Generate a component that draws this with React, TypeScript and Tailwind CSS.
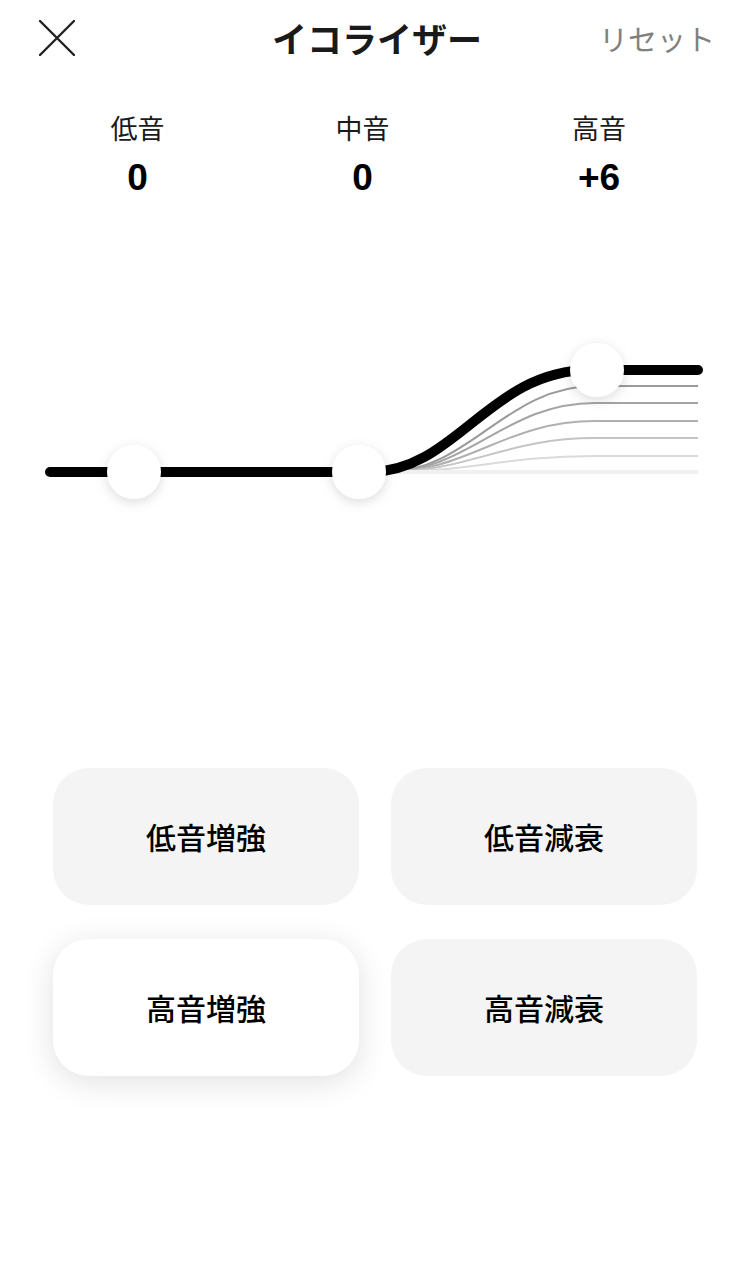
import React from "react";

const jp = { fontFamily: '"Noto Sans CJK JP", "Noto Sans", sans-serif' };
const num = { fontFamily: '"Liberation Sans", Arial, sans-serif' };

const bands = [
  { label: "低音", value: "0" },
  { label: "中音", value: "0" },
  { label: "高音", value: "+6" },
];

const presets = [
  { label: "低音増強", active: false },
  { label: "低音減衰", active: false },
  { label: "高音増強", active: true },
  { label: "高音減衰", active: false },
];

// faded curves behind the main line, top to bottom
const ghosts = [
  { y: 385, color: "#9a9a9a", w: 2 },
  { y: 402, color: "#a4a4a4", w: 2 },
  { y: 420, color: "#b0b0b0", w: 2 },
  { y: 437, color: "#c4c4c4", w: 2 },
  { y: 455, color: "#dadada", w: 2 },
  { y: 471, color: "#f0f0f0", w: 4 },
];

function Curve() {
  return (
    <svg
      width="750"
      height="260"
      viewBox="0 290 750 260"
      className="block"
    >
      <defs>
        <filter id="knob" x="-50%" y="-50%" width="200%" height="200%">
          <feDropShadow dx="0" dy="3" stdDeviation="6" floodColor="#000" floodOpacity="0.14" />
        </filter>
      </defs>
      {ghosts.map((g) => (
        <path
          key={g.y}
          d={`M385 471 C470 471 505 ${g.y} 595 ${g.y} L698 ${g.y}`}
          fill="none"
          stroke={g.color}
          strokeWidth={g.w}
        />
      ))}
      <path
        d="M50 471 L370 471 C455 471 490 369 590 369 L698 369"
        fill="none"
        stroke="#000"
        strokeWidth="10"
        strokeLinecap="round"
        strokeLinejoin="round"
      />
      <g filter="url(#knob)" fill="#fff">
        <circle cx="134" cy="471" r="27" />
        <circle cx="359" cy="471" r="27" />
        <circle cx="597" cy="369" r="27" />
      </g>
    </svg>
  );
}

export default function App() {
  return (
    <div className="w-[750px] h-[1288px] bg-white overflow-hidden" style={jp}>
      <header className="h-[76px] grid grid-cols-[1fr_auto_1fr] items-center pl-[39px] pr-[35px]">
        <button className="w-9 h-9 justify-self-start">
          <svg width="36" height="36" viewBox="0 0 36 36">
            <path d="M1 1 L35 35 M35 1 L1 35" stroke="#222" strokeWidth="2.4" strokeLinecap="round" />
          </svg>
        </button>
        <h1 className="text-[35px] font-bold text-[#1a1a1a] leading-none -mt-[2px]">イコライザー</h1>
        <button className="justify-self-end text-[29px] text-[#808080] leading-none">リセット</button>
      </header>

      <div className="mt-[36px] pl-[25px] grid grid-cols-[225px_225px_248px]">
        {bands.map((b) => (
          <div key={b.label} className="flex flex-col items-center">
            <span className="text-[27px] leading-[32px] text-[#1a1a1a]">{b.label}</span>
            <span className="mt-[14px] text-[37px] leading-[40px] font-bold text-black" style={num}>
              {b.value}
            </span>
          </div>
        ))}
      </div>

      <div className="mt-[93px]">
        <Curve />
      </div>

      <div className="mt-[217px] px-[53px] grid grid-cols-2 gap-x-[32px] gap-y-[34px]">
        {presets.map((p) => (
          <button
            key={p.label}
            className={
              p.active
                ? "h-[137px] rounded-[36px] bg-white shadow-[0_6px_32px_rgba(0,0,0,0.12)] flex items-center justify-center text-[30px] font-medium text-black"
                : "h-[137px] rounded-[36px] bg-[#f4f4f4] flex items-center justify-center text-[30px] font-medium text-black"
            }
          >
            {p.label}
          </button>
        ))}
      </div>
    </div>
  );
}
